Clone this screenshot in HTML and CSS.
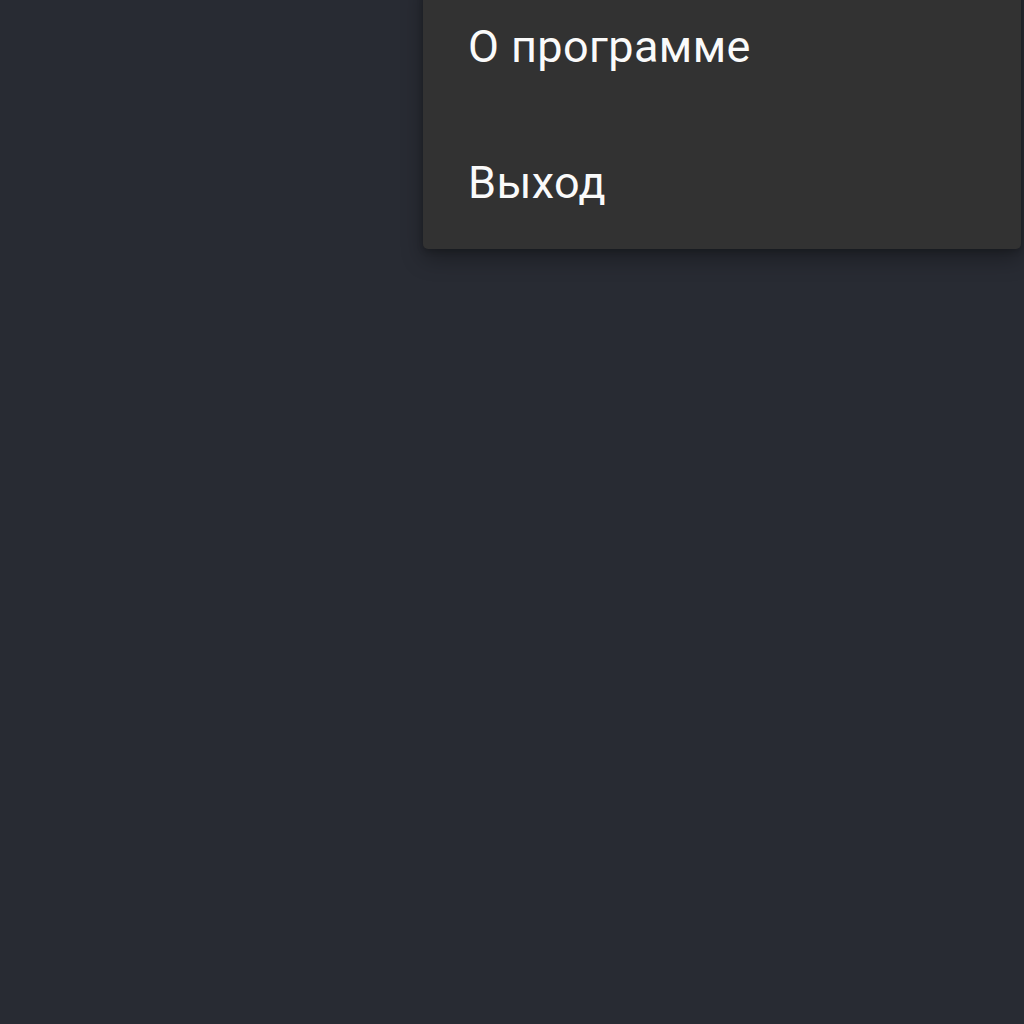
FILE: index.html
```html
<!DOCTYPE html>
<html lang="ru">

<head>
    <meta charset="UTF-8">
    <meta name="viewport" content="width=device-width, initial-scale=1.0">
    <title>Меню</title>
    <link rel="stylesheet" href="styles.css">
</head>

<body>

    <div class="screen">
        <!-- Выпадающее меню -->
        <ul class="menu">
            <li>О программе</li>
            <li>Выход</li>
        </ul>
    </div>

</body>

</html>
```

FILE: styles.css
```css
body {
    margin: 0;
    font-family: Roboto, "Noto Sans", sans-serif;
    background-color: #282b33;
}

.screen {
    height: 100vh;
    display: flex;
    justify-content: flex-end;
    align-items: flex-start;
    overflow: hidden;
}

.menu {
    list-style-type: none;
    margin: -23px 3px 0 0;
    padding: 0;
    width: 598px;
    background-color: #323232;
    border-radius: 5px;
    box-shadow: 0 10px 22px rgba(0, 0, 0, 0.3), 0 2px 6px rgba(0, 0, 0, 0.2);
}

.menu li {
    height: 136px;
    display: flex;
    align-items: center;
    padding-left: 45px;
    padding-top: 3px;
    box-sizing: border-box;
    font-size: 45px;
    letter-spacing: 0.4px;
    color: #fafafa;
}
```
